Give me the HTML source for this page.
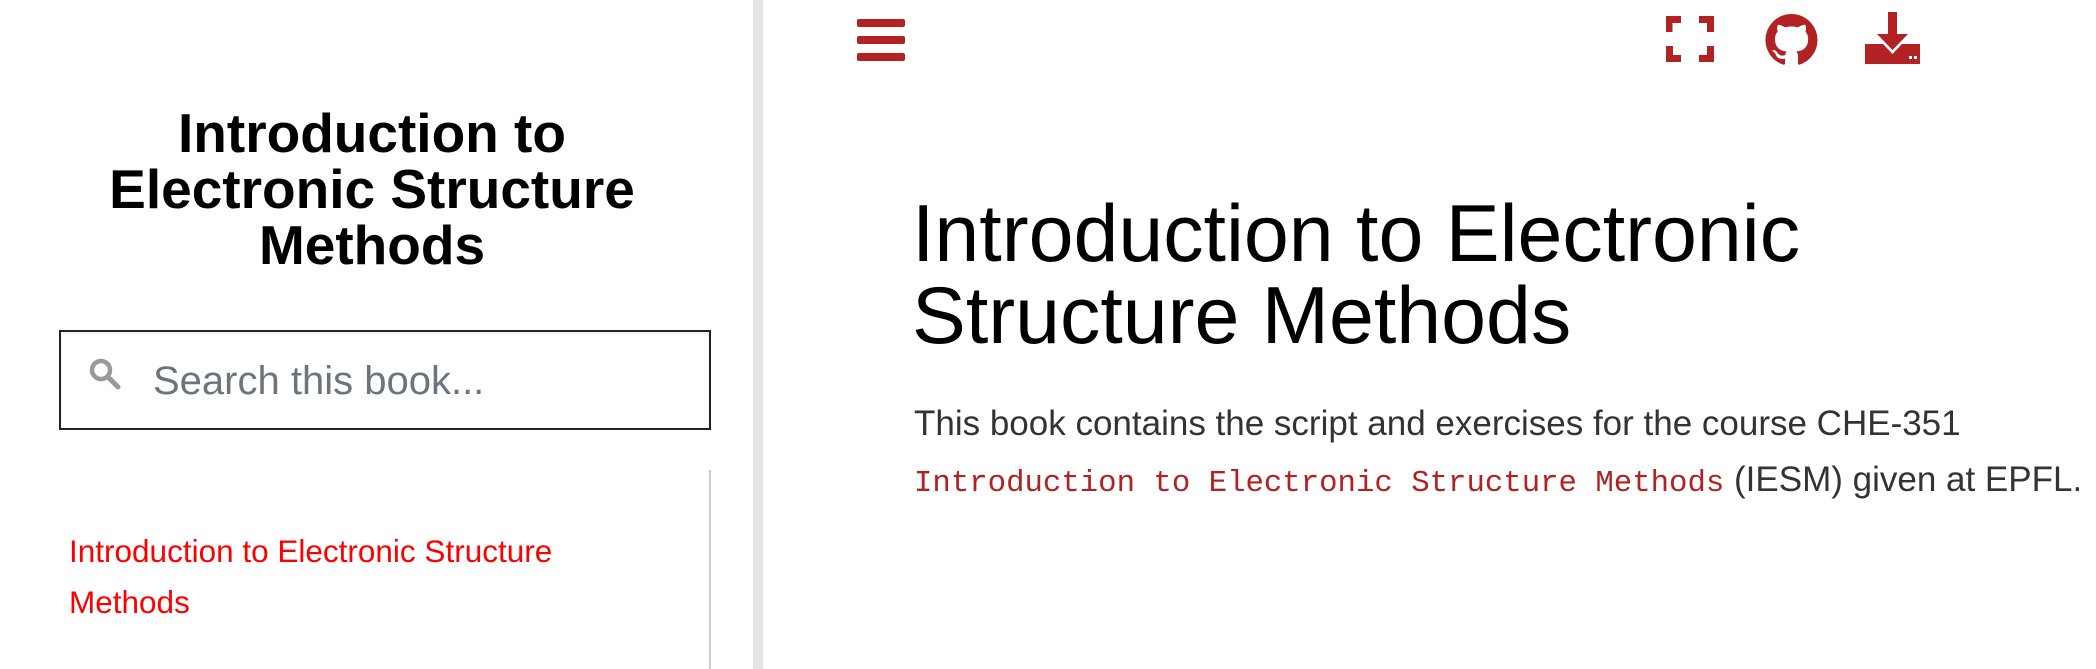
<!DOCTYPE html>
<html><head><meta charset="utf-8"><style>
*{margin:0;padding:0;box-sizing:border-box}
body{width:2096px;height:669px;overflow:hidden;background:#fff;font-family:"Liberation Sans",Arial,sans-serif;position:relative}
.abs{position:absolute;white-space:nowrap}
</style></head><body>
<div class="abs" style="left:0;top:105px;width:744px;text-align:center;font-weight:bold;font-size:55px;line-height:56px;color:#000">Introduction to<br>Electronic Structure<br>Methods</div>
<div class="abs" style="left:59px;top:330px;width:652px;height:100px;border:2px solid #222;box-shadow:inset 0 2px 3px #eee"></div>
<svg class="abs" style="left:88px;top:357px" width="34" height="34" viewBox="0 0 34 34"><circle cx="13" cy="13" r="9" fill="none" stroke="#999" stroke-width="4.5"/><line x1="20" y1="20" x2="30" y2="30" stroke="#999" stroke-width="5" stroke-linecap="round"/></svg>
<div class="abs" style="left:153px;top:357px;font-size:40px;line-height:48px;color:#6c757d">Search this book...</div>
<div class="abs" style="left:709px;top:470px;width:2px;height:199px;background:#ccc"></div>
<div class="abs" style="left:69px;top:526px;font-size:31.5px;line-height:51px;color:#f00">Introduction to Electronic Structure<br>Methods</div>
<div class="abs" style="left:753px;top:0;width:10px;height:669px;background:#e6e6e6"></div>
<svg class="abs" style="left:857px;top:19px" width="48" height="42" viewBox="0 0 48 42"><rect x="0" y="0" width="48" height="8" rx="2" fill="#b22222"/><rect x="0" y="17" width="48" height="8" rx="2" fill="#b22222"/><rect x="0" y="34" width="48" height="8" rx="2" fill="#b22222"/></svg>
<svg class="abs" style="left:1666px;top:16px" width="48" height="46" viewBox="0 0 48 46" fill="none" stroke="#b22222" stroke-width="7"><path d="M3 16V3.5H15M33 3.5H44.5V16M44.5 30V42.5H33M15 42.5H3.5V30"/></svg>
<svg class="abs" style="left:1765px;top:14px" width="53" height="52" viewBox="0 0 16 16"><path fill="#b22222" d="M8 0C3.58 0 0 3.580 0 8c0 3.54 2.29 6.53 5.47 7.59.4.07.55-.17.55-.38 0-.19-.01-.82-.01-1.49-2.010.37-2.53-.49-2.690-.94-.09-.23-.48-.94-.82-1.130-.28-.15-.68-.52-.01-.53.63-.01 1.08.58 1.23.82.72 1.21 1.87.87 2.33.66.07-.52.28-.87.51-1.07-1.78-.2-3.64-.89-3.64-3.95 0-.87.31-1.59.82-2.15-.08-.2-.36-1.02.08-2.12 0 0 .67-.21 2.2.82.64-.18 1.32-.27 2-.27.68 0 1.36.09 2 .27 1.53-1.04 2.2-.82 2.2-.82.44 1.1.16 1.92.08 2.12.51.56.82 1.27.82 2.15 0 3.07-1.87 3.75-3.65 3.95.29.25.54.73.54 1.48 0 1.07-.01 1.93-.01 2.2 0 .21.15.46.55.38A8.013 8.013 0 0016 8c0-4.42-3.58-8-8-8z"/></svg>
<svg class="abs" style="left:1865px;top:12px" width="55" height="54" viewBox="0 0 55 54"><rect x="23" y="0" width="9" height="24" fill="#b22222"/><path d="M12 22H43L27.5 38Z" fill="#b22222"/><path d="M0 32H18L27.5 42L37 32H55V52H0Z" fill="#b22222"/><rect x="44" y="44" width="3" height="3" fill="#fff"/><rect x="49" y="44" width="3" height="3" fill="#fff"/></svg>
<div class="abs" style="left:912px;top:193px;font-size:80.7px;line-height:82px;color:#000">Introduction to Electronic<br>Structure Methods</div>
<div class="abs" style="left:914px;top:396px;font-size:35px;line-height:56px;color:#333">This book contains the script and exercises for the course CHE-351<br><span style="font-family:'Liberation Mono',monospace;font-size:30.7px;color:#b22222">Introduction to Electronic Structure Methods</span> (IESM) given at EPFL.</div>
</body></html>
